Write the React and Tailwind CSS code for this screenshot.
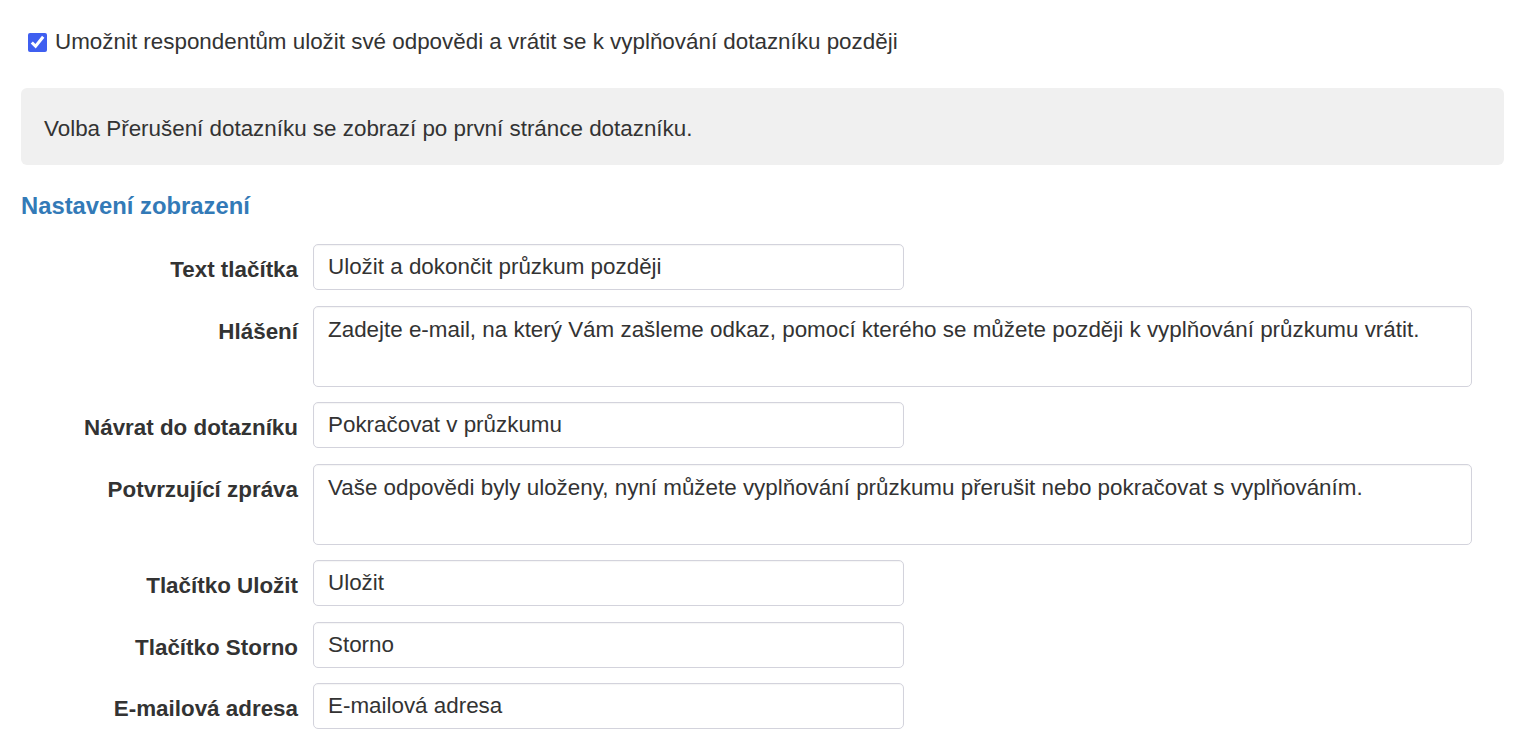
import React from "react";

const rows = [
  { label: "Text tlačítka", value: "Uložit a dokončit průzkum později", area: false },
  { label: "Hlášení", value: "Zadejte e-mail, na který Vám zašleme odkaz, pomocí kterého se můžete později k vyplňování průzkumu vrátit.", area: true },
  { label: "Návrat do dotazníku", value: "Pokračovat v průzkumu", area: false },
  { label: "Potvrzující zpráva", value: "Vaše odpovědi byly uloženy, nyní můžete vyplňování průzkumu přerušit nebo pokračovat s vyplňováním.", area: true },
  { label: "Tlačítko Uložit", value: "Uložit", area: false },
  { label: "Tlačítko Storno", value: "Storno", area: false },
  { label: "E-mailová adresa", value: "E-mailová adresa", area: false },
];

const FONT = '"Liberation Sans", Arial, Helvetica, sans-serif';

export default function App() {
  return (
    <div
      className="min-h-screen bg-white text-[#333333] pt-[26px] pl-[21px] pr-[23px] text-[22.4px] leading-[32px]"
      style={{ fontFamily: FONT }}
    >
      <label className="flex items-center h-[32px] ml-[7px] gap-[8px]">
        <input
          type="checkbox"
          defaultChecked
          className="m-0 w-[19px] h-[19px] accent-[#3f5ff0]"
        />
        <span>Umožnit respondentům uložit své odpovědi a vrátit se k vyplňování dotazníku později</span>
      </label>

      <div className="mt-[30px] h-[77px] flex items-center px-[23px] pt-[4px] bg-[#f0f0f0] rounded-[6px]">
        Volba Přerušení dotazníku se zobrazí po první stránce dotazníku.
      </div>

      <h3 className="mt-[28px] text-[23.8px] leading-[26px] font-bold text-[#337ab7]">
        Nastavení zobrazení
      </h3>

      <div className="mt-[25px] flex flex-col gap-[15.5px]">
        {rows.map((r) => (
          <div key={r.label} className="flex items-start">
            <div className="w-[292px] shrink-0 pr-[15px] pt-[10px] text-right font-bold">
              {r.label}
            </div>
            {r.area ? (
              <textarea
                readOnly
                value={r.value}
                className="w-[1159px] h-[81px] resize-none border border-[#d3d3dc] rounded-[5px] px-[14px] pt-[7px] pb-[4px] text-[22.4px] leading-[32px] text-[#333333] outline-none shadow-[inset_0_1px_1px_rgba(0,0,0,0.04)]"
                style={{ fontFamily: FONT }}
              />
            ) : (
              <input
                readOnly
                value={r.value}
                className="w-[591px] h-[46px] border border-[#d3d3dc] rounded-[5px] px-[14px] py-[6px] text-[22.4px] leading-[32px] text-[#333333] outline-none shadow-[inset_0_1px_1px_rgba(0,0,0,0.04)]"
                style={{ fontFamily: FONT }}
              />
            )}
          </div>
        ))}
      </div>
    </div>
  );
}
